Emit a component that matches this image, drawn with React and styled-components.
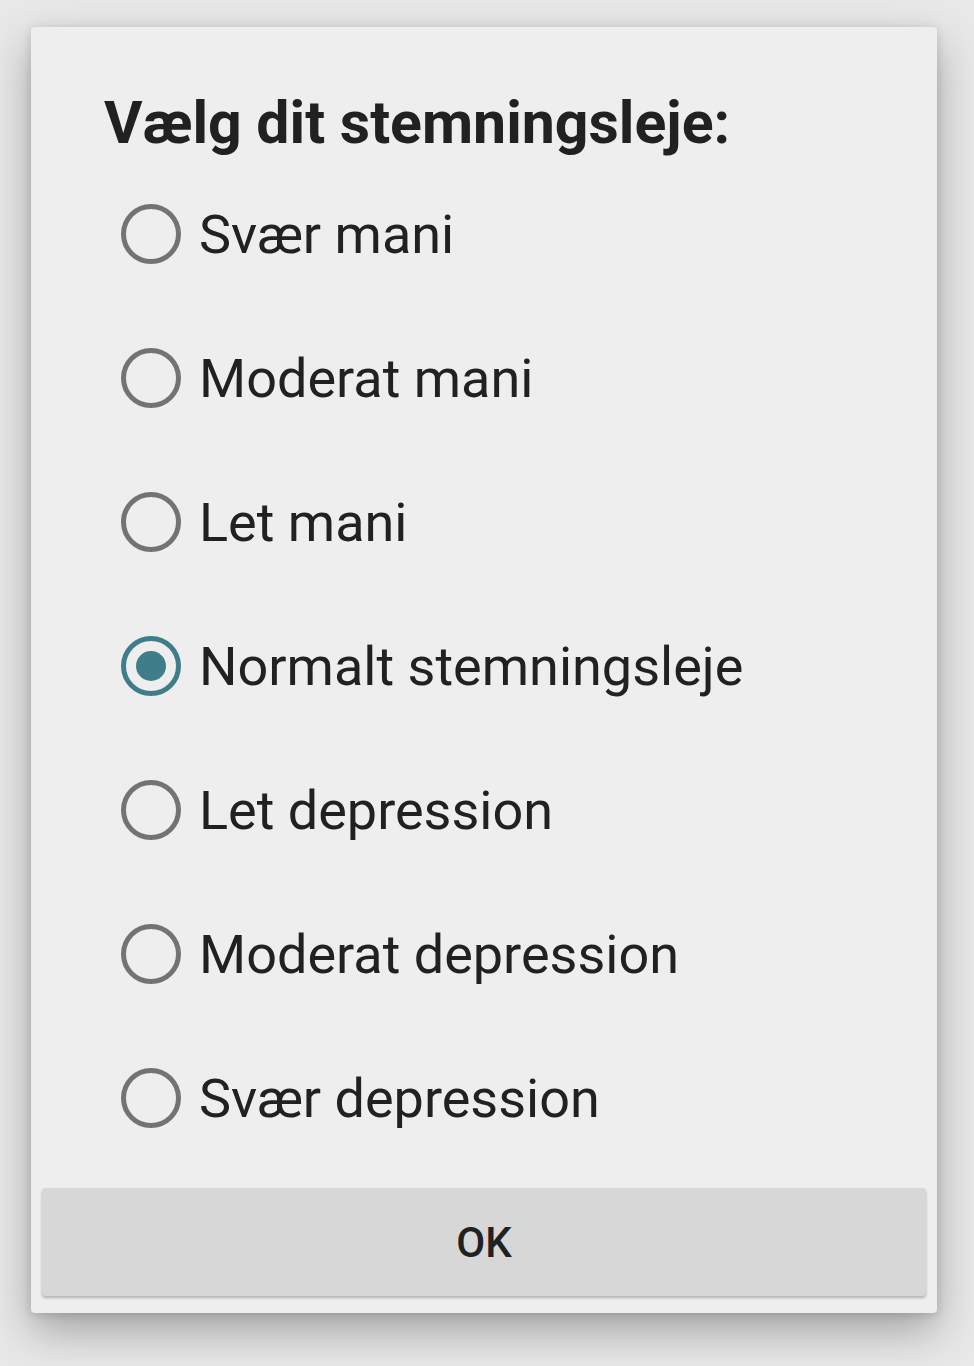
import styled, { createGlobalStyle } from "styled-components";
import { useState } from "react";

const GlobalStyle = createGlobalStyle`
  html, body {
    margin: 0;
    padding: 0;
    background: #e8e8e8;
    font-family: Roboto, "Liberation Sans", sans-serif;
  }
`;

const options = [
  "Svær mani",
  "Moderat mani",
  "Let mani",
  "Normalt stemningsleje",
  "Let depression",
  "Moderat depression",
  "Svær depression",
];

const App = () => {
  const [selected, setSelected] = useState(3);

  return (
    <Page>
      <GlobalStyle />
      <Dialog>
        <Title>Vælg dit stemningsleje:</Title>
        <OptionList>
          {options.map((label, i) => (
            <Option key={label} onClick={() => setSelected(i)}>
              <Radio checked={selected === i} />
              <Label>{label}</Label>
            </Option>
          ))}
        </OptionList>
        <OkButton>OK</OkButton>
      </Dialog>
    </Page>
  );
};

export default App;

const Page = styled.div`
  width: 974px;
  height: 1366px;
  padding: 27px 37px 0 31px;
  box-sizing: border-box;
  overflow: hidden;
`;

const Dialog = styled.div`
  width: 906px;
  height: 1286px;
  box-sizing: border-box;
  background: #eeeeee;
  border-radius: 4px;
  box-shadow: 0 18px 44px rgba(0, 0, 0, 0.3), 0 2px 10px rgba(0, 0, 0, 0.14);
  padding: 0 11px 17px 11px;
  display: flex;
  flex-direction: column;
`;

const Title = styled.h1`
  margin: 0;
  padding: 59px 0 0 62px;
  font-size: 59px;
  font-weight: 700;
  line-height: 74px;
  color: #212121;
`;

const OptionList = styled.div`
  display: flex;
  flex-direction: column;
  margin-top: 2px;
  padding-left: 79px;
  flex: 1;
`;

const Option = styled.label`
  display: flex;
  align-items: center;
  height: 144px;
  gap: 18px;
  cursor: pointer;
`;

const Radio = styled.span`
  width: 60px;
  height: 60px;
  flex-shrink: 0;
  box-sizing: border-box;
  border-radius: 50%;
  border: 5px solid ${(p) => (p.checked ? "#3f7d8b" : "#737373")};
  display: flex;
  align-items: center;
  justify-content: center;
  &::after {
    content: "";
    width: 30px;
    height: 30px;
    border-radius: 50%;
    background: #3f7d8b;
    display: ${(p) => (p.checked ? "block" : "none")};
  }
`;

const Label = styled.span`
  font-size: 54px;
  color: #212121;
`;

const OkButton = styled.button`
  height: 108px;
  flex-shrink: 0;
  width: 100%;
  border: none;
  border-radius: 4px;
  background: #d6d7d6;
  box-shadow: 0 2px 3px rgba(0, 0, 0, 0.25);
  font-family: Roboto, "Liberation Sans", sans-serif;
  font-size: 42px;
  font-weight: 500;
  color: #212121;
`;
